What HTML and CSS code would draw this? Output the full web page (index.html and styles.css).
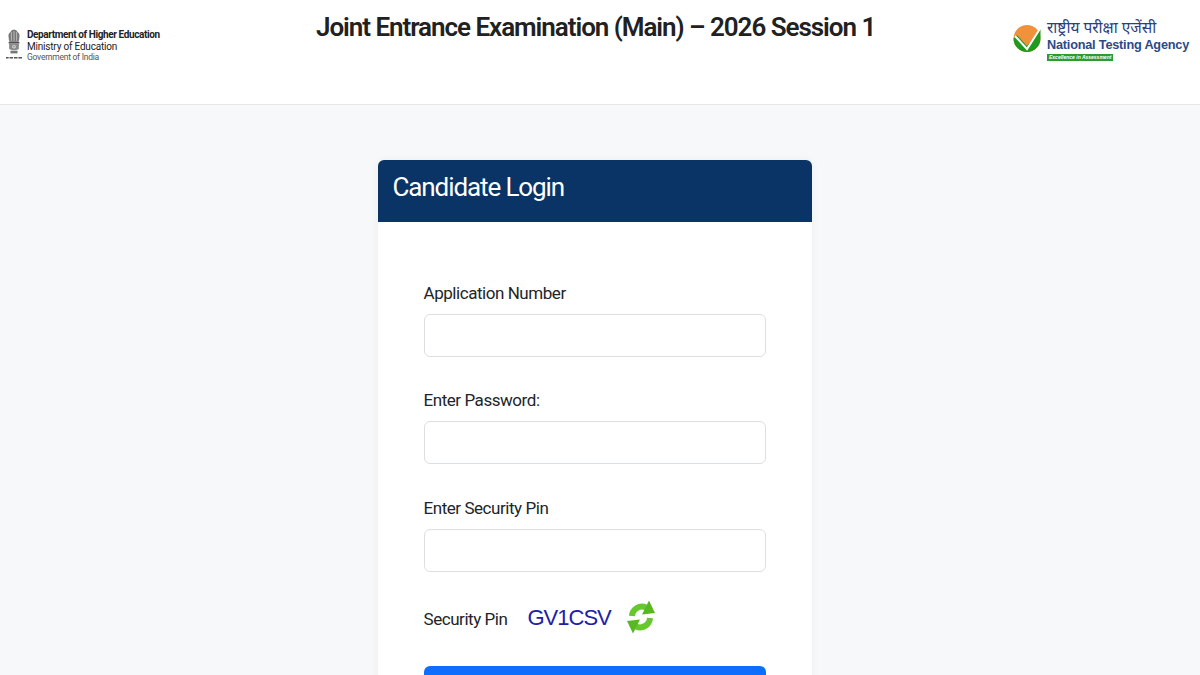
FILE: index.html
```html
<!DOCTYPE html>
<html lang="en">
<head>
<meta charset="utf-8">
<title>Candidate Login</title>
<link rel="stylesheet" href="styles.css">
</head>
<body>
<header class="topbar">
  <div class="dept">
    <svg class="emblem" viewBox="0 0 18 36" width="16" height="35" aria-hidden="true">
      <path d="M5 4 Q6 1 9 1 Q12 1 13 4 Q16 6 15 10 Q15 13 14 15 L4 15 Q3 13 3 10 Q2 6 5 4Z" fill="#777"/>
      <path d="M6 4v10M9 3v11M12 4v10" stroke="#d8d8d8" stroke-width=".8"/>
      <rect x="3" y="15" width="12" height="2" fill="#4f4f4f"/>
      <path d="M3.500 17.500 L14.500 17.500 L14.500 23 Q9 26 3.500 23Z" fill="#8a8a8a"/>
      <circle cx="9" cy="20.500" r="2" fill="#e6e6e6"/>
      <circle cx="9" cy="20.500" r=".8" fill="#555"/>
      <rect x="5" y="25" width="8" height="3" fill="#777"/>
      <path d="M0 33h3M4 33h4M9 33h4M14 33h4" stroke="#555" stroke-width="1.600"/>
    </svg>
    <div class="dept-text">
      <div class="dept-name">Department of Higher Education</div>
      <div class="dept-ministry">Ministry of Education</div>
      <div class="dept-gov">Government of India</div>
    </div>
  </div>
  <h1 class="exam-title">Joint Entrance Examination (Main) – 2026 Session 1</h1>
  <div class="nta">
    <svg class="nta-mark" viewBox="0 0 28 32" width="28" height="32" aria-hidden="true">
      <circle cx="14" cy="15.500" r="13.500" fill="#f0913c"/>
      <path d="M.5 15.500 A13.500 13.500 0 0 0 27.500 15.500 L27.500 6 L14 23 L4 12Z" fill="#1f9a1f"/>
      <path d="M2 13 L14 26 L27.500 5" fill="none" stroke="#fff" stroke-width="2"/>
    </svg>
    <div class="nta-text">
      <div class="nta-hindi">राष्ट्रीय परीक्षा एजेंसी</div>
      <div class="nta-name">National Testing Agency</div>
      <div class="nta-tag">Excellence in Assessment</div>
    </div>
  </div>
</header>
<main class="page">
  <section class="card">
    <h2 class="card-head">Candidate Login</h2>
    <form class="card-body">
      <div class="field">
        <label class="label">Application Number</label>
        <input class="input" type="text">
      </div>
      <div class="field">
        <label class="label">Enter Password:</label>
        <input class="input" type="password">
      </div>
      <div class="field">
        <label class="label">Enter Security Pin</label>
        <input class="input" type="text">
      </div>
      <div class="captcha-row">
        <span class="label captcha-label">Security Pin</span>
        <span class="captcha">GV1CSV</span>
        <svg class="refresh" viewBox="0 0 30 36" width="30" height="36" aria-hidden="true">
          <path d="M6 17 A10 10 0 0 1 20 8.500" fill="none" stroke="#66c82c" stroke-width="6"/>
          <path d="M24 19 A10 10 0 0 1 10 27.500" fill="none" stroke="#66c82c" stroke-width="6"/>
          <path d="M16 15.500 L29 14 L23 1.500Z" fill="#58b822"/>
          <path d="M14 20.500 L1 22 L7 34.500Z" fill="#58b822"/>
        </svg>
      </div>
      <button class="submit" type="button"></button>
    </form>
  </section>
</main>
</body>
</html>
```
FILE: styles.css
```css
html, body {
  margin: 0;
  height: 675px;
  overflow: hidden;
}
body {
  background: #f7f8fa;
  font-family: Roboto, "Noto Sans", sans-serif;
  color: #212529;
}
.topbar {
  height: 105px;
  box-sizing: border-box;
  background: #fff;
  border-bottom: 1px solid #e4e6e8;
  display: flex;
  align-items: flex-start;
  padding: 0 10px 0 6px;
}
.dept {
  display: flex;
  gap: 5px;
  width: 310px;
  flex: none;
  padding-top: 27px;
}
.emblem { flex: none; }
.dept-text {
  display: flex;
  flex-direction: column;
  color: #222;
  padding-top: 1px;
}
.dept-name { font-size: 10px; font-weight: 700; line-height: 13px; letter-spacing: -.4px; white-space: nowrap; }
.dept-ministry { font-size: 10px; line-height: 11px; letter-spacing: -.2px; }
.dept-gov { font-size: 8.500px; line-height: 10px; letter-spacing: -.25px; color: #555; }
.exam-title {
  margin: 9px 0 0;
  font-size: 26px;
  line-height: 36px;
  font-weight: 600;
  letter-spacing: -1.040px;
  color: #212121;
  white-space: nowrap;
  flex: none;
}
.nta {
  width: 177px;
  margin-left: auto;
  display: flex;
  gap: 6px;
  padding-top: 21px;
  box-sizing: border-box;
}
.nta-mark { margin-top: 2px; flex: none; }
.nta-text { display: flex; flex-direction: column; align-items: flex-start; }
.nta-hindi {
  font-family: "Noto Sans Devanagari", "Noto Sans", sans-serif;
  font-size: 15.500px;
  line-height: 16px;
  color: #2a3f7c;
  white-space: nowrap;
}
.nta-name {
  font-family: "Liberation Sans", sans-serif;
  font-size: 12.700px;
  line-height: 17px;
  font-weight: 700;
  color: #2c4a86;
  letter-spacing: -.2px;
  white-space: nowrap;
}
.nta-tag {
  background: #2d9b2d;
  color: #fff;
  font-family: "Liberation Sans", sans-serif;
  font-size: 5px;
  font-style: italic;
  font-weight: 700;
  line-height: 7px;
  padding: 0 2px;
  white-space: nowrap;
}
.page {
  display: flex;
  justify-content: center;
  padding: 55px 11px 0 0;
}
.card {
  width: 434px;
  flex: none;
  background: #fff;
  border-radius: 6px;
  box-shadow: 0 0 8px rgba(0, 0, 0, .05);
}
.card-head {
  margin: 0;
  height: 62px;
  box-sizing: border-box;
  padding: 0 15px;
  background: #0a3366;
  border-radius: 6px 6px 0 0;
  color: #fff;
  font-size: 26px;
  line-height: 55px;
  font-weight: 400;
  letter-spacing: -1.100px;
}
.card-body {
  padding: 55px 46px 0;
  display: flex;
  flex-direction: column;
}
.field {
  display: flex;
  flex-direction: column;
  margin-bottom: 27.300px;
}
.label {
  font-size: 17px;
  line-height: 32px;
  font-weight: 400;
  letter-spacing: -.45px;
  margin-bottom: 5px;
  color: #212529;
}
.input {
  height: 43px;
  box-sizing: border-box;
  border: 1px solid #dcdfe2;
  border-radius: 6px;
  background: #fff;
}
.captcha-row {
  display: flex;
  align-items: center;
  height: 40px;
}
.captcha-label { width: 104px; margin: 0; flex: none; }
.captcha {
  width: 98px;
  flex: none;
  font-family: "Liberation Sans", sans-serif;
  font-size: 22px;
  letter-spacing: -1px;
  color: #2020a8;
  margin-bottom: 1px;
}
.refresh { flex: none; margin-bottom: 3px; }
.submit {
  margin-top: 26.900px;
  height: 44px;
  border: 0;
  border-radius: 6px;
  background: #0d6efd;
  color: #fff;
  font: inherit;
}
```
